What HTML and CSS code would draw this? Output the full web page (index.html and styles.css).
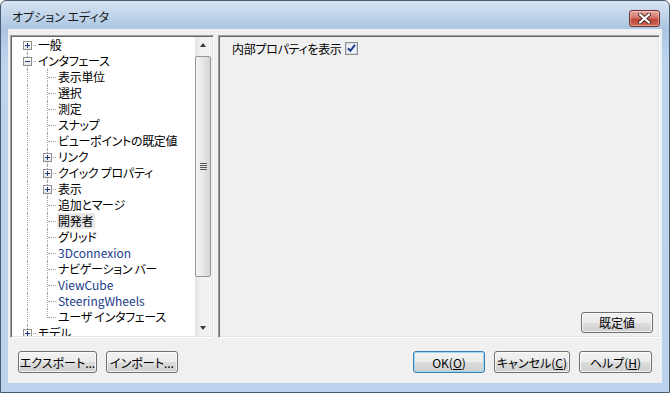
FILE: index.html
```html
<!DOCTYPE html>
<html lang="ja">
<head>
  <meta charset="UTF-8">
  <title>オプション エディタ</title>
  <link rel="stylesheet" href="styles.css">
</head>
<body>

<div class="window">
  <div class="titlebar">
    <span class="title">オプション エディタ</span>
    <span class="close">
      <svg width="17" height="11" viewBox="0 0 17 11">
        <path d="M4 1.5 L13 9.5 M13 1.5 L4 9.5" stroke="#4a2a2a" stroke-width="4" stroke-linecap="round" fill="none"/>
        <path d="M4 1.5 L13 9.5 M13 1.5 L4 9.5" stroke="#ffffff" stroke-width="2.2" stroke-linecap="round" fill="none"/>
      </svg>
    </span>
  </div>

  <div class="client">
    <div class="main">
      <div class="tree">
        <ul class="nodes">
          <li class="row"><span class="n first"><i class="exp plus"></i></span><span class="t">一般</span></li>
          <li class="row"><span class="n mid"><i class="exp"></i></span><span class="t">インタフェース</span></li>
          <li class="row"><span class="g"></span><span class="n mid"></span><span class="t">表示単位</span></li>
          <li class="row"><span class="g"></span><span class="n mid"></span><span class="t">選択</span></li>
          <li class="row"><span class="g"></span><span class="n mid"></span><span class="t">測定</span></li>
          <li class="row"><span class="g"></span><span class="n mid"></span><span class="t">スナップ</span></li>
          <li class="row"><span class="g"></span><span class="n mid"></span><span class="t">ビューポイントの既定値</span></li>
          <li class="row"><span class="g"></span><span class="n mid"><i class="exp plus"></i></span><span class="t">リンク</span></li>
          <li class="row"><span class="g"></span><span class="n mid"><i class="exp plus"></i></span><span class="t">クイック プロパティ</span></li>
          <li class="row"><span class="g"></span><span class="n mid"><i class="exp plus"></i></span><span class="t">表示</span></li>
          <li class="row"><span class="g"></span><span class="n mid"></span><span class="t">追加とマージ</span></li>
          <li class="row"><span class="g"></span><span class="n mid"></span><span class="t hover">開発者</span></li>
          <li class="row"><span class="g"></span><span class="n mid"></span><span class="t">グリッド</span></li>
          <li class="row"><span class="g"></span><span class="n mid"></span><span class="t latin">3Dconnexion</span></li>
          <li class="row"><span class="g"></span><span class="n mid"></span><span class="t">ナビゲーション バー</span></li>
          <li class="row"><span class="g"></span><span class="n mid"></span><span class="t latin">ViewCube</span></li>
          <li class="row"><span class="g"></span><span class="n mid"></span><span class="t latin">SteeringWheels</span></li>
          <li class="row"><span class="g"></span><span class="n last"></span><span class="t">ユーザ インタフェース</span></li>
          <li class="row"><span class="n mid"><i class="exp plus"></i></span><span class="t">モデル</span></li>
        </ul>
        <div class="scrollbar">
          <div class="arrow up"></div>
          <div class="track">
            <div class="thumb"><span class="grip"></span></div>
          </div>
          <div class="arrow down"></div>
        </div>
      </div>

      <div class="panel">
        <div class="option">
          <span class="option-label">内部プロパティを表示</span>
          <svg class="check" width="13" height="13" viewBox="0 0 13 13">
            <rect x="0.5" y="0.5" width="12" height="12" fill="#f6f6f6" stroke="#8e8f8f"/>
            <rect x="1.5" y="1.5" width="10" height="10" fill="#eef2f8" stroke="#d4d9e2"/>
            <path d="M3 6.2 L5.4 8.8 L10 2.8" stroke="#1e3c8e" stroke-width="2" fill="none"/>
          </svg>
        </div>
        <div class="panel-foot">
          <button class="btn btn-defaults">既定値</button>
        </div>
      </div>
    </div>

    <div class="footer">
      <div class="group">
        <button class="btn btn-export">エクスポート...</button>
        <button class="btn btn-import">インポート...</button>
      </div>
      <div class="group">
        <button class="btn btn-ok">OK(<u>O</u>)</button>
        <button class="btn btn-cancel">キャンセル(<u>C</u>)</button>
        <button class="btn btn-help">ヘルプ(<u>H</u>)</button>
      </div>
    </div>
  </div>
</div>

</body>
</html>
```

FILE: styles.css
```css
* { box-sizing: border-box; }
body { margin: 0; background: #ffffff; font-family: "Noto Sans CJK JP", sans-serif; font-size: 12px; color: #000; font-feature-settings: "palt"; }

.window { width: 670px; height: 393px; display: flex; flex-direction: column; padding: 0 7px 9px; border: 1px solid #4b5b6e; border-radius: 6px 6px 0 0; background: linear-gradient(#d7e4f2, #abc5e2 28px, #bcd4ee 60px, #bad2ec); }

/* title bar */
.titlebar { height: 28px; display: flex; justify-content: space-between; align-items: flex-start; }
.title { padding: 8px 0 0 4px; font-size: 12px; line-height: 16px; color: #1a1a1a; }
.close { width: 31px; height: 17px; margin: 9px 2px 0 0; display: flex; align-items: center; justify-content: center; border: 1px solid #6e3030; border-radius: 3px; background: linear-gradient(#e9a99f, #d27468 45%, #c0453a 55%, #cf6a50); box-shadow: inset 0 0 0 1px rgba(255, 255, 255, 0.35); }

/* client area */
.client { flex: 1; display: flex; flex-direction: column; background: #f0f0f0; padding: 6px 2px 0 2px; }
.main { height: 303px; display: flex; gap: 4px; }

/* tree */
.tree { width: 204px; display: flex; background: #fff; border: 1px solid; border-color: #a0a0a0 #ffffff #ffffff #a0a0a0; box-shadow: inset 1px 1px 0 #696969, inset -1px -1px 0 #e3e3e3; padding: 1px; }
.nodes { flex: 1; list-style: none; margin: 0; padding: 0 0 0 5px; overflow: hidden; }
.row { display: flex; height: 16px; line-height: 16px; white-space: nowrap; }
.g, .n { position: relative; width: 20px; flex: none; }
.g::before { content: ""; position: absolute; left: 10px; top: 0; bottom: 0; border-left: 1px dotted #a0a0a0; }
.n::before { content: ""; position: absolute; left: 10px; border-left: 1px dotted #a0a0a0; }
.n::after { content: ""; position: absolute; left: 11px; right: 1px; top: 8px; border-top: 1px dotted #a0a0a0; }
.n.mid::before { top: 0; bottom: 0; }
.n.first::before { top: 8px; bottom: 0; }
.n.last::before { top: 0; height: 9px; }
.exp { position: absolute; z-index: 1; left: 6px; top: 4px; width: 9px; height: 9px; border: 1px solid #919191; background: linear-gradient(#ffffff, #e4e4e4); }
.exp::before { content: ""; position: absolute; left: 1px; top: 3px; width: 5px; height: 1px; background: #1f3a78; }
.exp.plus::after { content: ""; position: absolute; left: 3px; top: 1px; width: 1px; height: 5px; background: #1f3a78; }
.t { padding: 0 2px 0 1px; letter-spacing: -0.3px; }
.t.hover { background: #e8e8e8; }
.t.latin { color: #1d3c8c; letter-spacing: 0; }

/* scrollbar */
.scrollbar { width: 17px; display: flex; flex-direction: column; background: linear-gradient(to right, #e4e4e4, #f2f2f2 40%, #f2f2f2); }
.arrow { height: 17px; position: relative; }
.arrow::before { content: ""; position: absolute; left: 5px; border-left: 3.5px solid transparent; border-right: 3.5px solid transparent; }
.arrow.up::before { top: 6px; border-bottom: 4px solid #3c3c3c; }
.arrow.down::before { top: 7px; border-top: 4px solid #3c3c3c; }
.track { flex: 1; padding-top: 2px; }
.thumb { height: 221px; margin: 0 1px 0 0; display: flex; align-items: center; justify-content: center; border: 1px solid #979797; border-radius: 2px; background: linear-gradient(to right, #f5f5f5, #e6e6e6 50%, #d4d4d4); }
.grip { width: 7px; height: 7px; background: repeating-linear-gradient(#5a5a5a 0 1px, #e6e6e6 1px 2px); }

/* right panel */
.panel { flex: 1; display: flex; flex-direction: column; justify-content: space-between; background: #f0f0f0; border: 1px solid; border-color: #a0a0a0 #ffffff #ffffff #a0a0a0; box-shadow: inset 1px 1px 0 #696969, inset -1px -1px 0 #e3e3e3; padding: 3px 6px 4px 13px; }
.option { display: flex; align-items: center; height: 16px; margin-top: 1px; }
.option-label { margin-right: 3px; letter-spacing: -0.3px; }
.check { flex: none; }
.panel-foot { display: flex; justify-content: flex-end; }

/* buttons */
.btn { height: 22px; padding: 0; font-family: inherit; font-size: 12px; font-feature-settings: "palt"; color: #000; border: 1px solid #707070; border-radius: 3px; background: linear-gradient(#f2f2f2, #ebebeb 50%, #dddddd 51%, #cfcfcf); box-shadow: inset 0 0 0 1px rgba(255, 255, 255, 0.7); }
.btn u { text-decoration: underline; }
.btn-defaults { width: 72px; height: 21px; }
.btn-export { width: 79px; }
.btn-import { width: 72px; }
.btn-ok { width: 72px; border-color: #3c7fb1; box-shadow: inset 0 0 0 1px #9fd5f5; }
.btn-cancel { width: 76px; }
.btn-help { width: 73px; }

.footer { display: flex; justify-content: space-between; margin-top: 13px; padding: 0 8px; }
.group { display: flex; gap: 9px; }
```
